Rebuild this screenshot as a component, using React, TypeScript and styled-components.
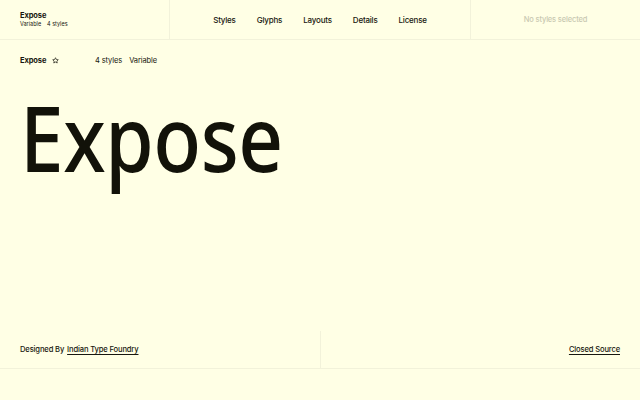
import React, {FC} from 'react';
import styled, {createGlobalStyle} from 'styled-components';

const GlobalStyle = createGlobalStyle`
    html, body {
        margin: 0;
        padding: 0;
        background: #ffffe5;
    }
    body {
        font-family: Inter, 'Liberation Sans', sans-serif;
        color: #17170f;
        -webkit-font-smoothing: antialiased;
    }
`;

const Page = styled.div`
    width: 640px;
    height: 400px;
    display: flex;
    flex-direction: column;
    background: #ffffe5;
    overflow: hidden;
`;

const Header = styled.header`
    height: 39px;
    display: grid;
    grid-template-columns: 170px 1fr 170px;
    border-bottom: 1px solid #f2f2da;
`;

const Brand = styled.div`
    display: flex;
    flex-direction: column;
    justify-content: center;
    padding-left: 20px;
    border-right: 1px solid #f2f2da;
`;

const BrandName = styled.span`
    font-size: 7.5px;
    font-weight: 700;
    line-height: 9px;
    letter-spacing: -0.1px;
`;

const BrandMeta = styled.span`
    font-size: 5.5px;
    line-height: 8px;
    display: flex;
    gap: 6px;
`;

const Nav = styled.nav`
    display: flex;
    align-items: center;
    justify-content: center;
    gap: 21px;
`;

const NavItem = styled.a`
    font-size: 8px;
    font-weight: 500;
    letter-spacing: -0.2px;
    color: #17170f;
    text-decoration: none;
`;

const Selection = styled.div`
    display: flex;
    align-items: center;
    justify-content: center;
    border-left: 1px solid #f2f2da;
    font-size: 7.5px;
    font-weight: 500;
    letter-spacing: -0.15px;
    color: #c9c9b2;
`;

const InfoRow = styled.div`
    height: 40px;
    display: flex;
    align-items: center;
    padding-left: 20px;
    font-size: 7.5px;
    letter-spacing: -0.1px;
`;

const FontTitle = styled.span`
    font-weight: 700;
    display: flex;
    align-items: center;
    gap: 6px;
    width: 75px;
`;

const Meta = styled.span<{gap?: number}>`
    margin-right: ${props => props.gap || 0}px;
`;

const Specimen = styled.div`
    flex: 1;
    padding: 12px 0 0 20px;
`;

// specimen word: Noto Sans squeezed to the narrow proportions of the original face
const BigWord = styled.div`
    display: inline-block;
    font-family: 'Noto Sans', 'Open Sans', sans-serif;
    font-size: 91px;
    font-weight: 500;
    line-height: 1;
    color: #121209;
    letter-spacing: -0.5px;
    transform: scaleX(0.86);
    transform-origin: left top;
`;

const Footer = styled.footer`
    height: 37px;
    display: grid;
    grid-template-columns: 1fr 1fr;
    border-bottom: 1px solid #f2f2da;
    margin-bottom: 31px;
    font-size: 7.6px;
    font-weight: 500;
    letter-spacing: -0.15px;
`;

const FooterCell = styled.div<{align?: 'left' | 'right'}>`
    display: flex;
    align-items: center;
    justify-content: ${props => (props.align === 'right' ? 'flex-end' : 'flex-start')};
    padding: 0 20px;
    border-left: ${props => (props.align === 'right' ? '1px solid #f2f2da' : 'none')};
`;

const FooterLink = styled.a`
    color: #17170f;
    text-decoration: underline;
    text-decoration-thickness: 0.6px;
    text-underline-offset: 1.5px;
    margin-left: 3px;
`;

const Star: FC = () => (
    <svg width="7" height="7" viewBox="0 0 24 24" fill="none" stroke="#17170f" strokeWidth="2.4" strokeLinejoin="round">
        <path d="M12 2.5l2.9 6.1 6.6.8-4.9 4.6 1.3 6.6L12 17.3l-5.9 3.3 1.3-6.6-4.9-4.6 6.6-.8z" />
    </svg>
);

const navItems = ['Styles', 'Glyphs', 'Layouts', 'Details', 'License'];

const App: FC = () => (
    <Page>
        <GlobalStyle />
        <Header>
            <Brand>
                <BrandName>Expose</BrandName>
                <BrandMeta>
                    <span>Variable</span>
                    <span>4 styles</span>
                </BrandMeta>
            </Brand>
            <Nav>
                {navItems.map(item => (
                    <NavItem key={item}>{item}</NavItem>
                ))}
            </Nav>
            <Selection>No styles selected</Selection>
        </Header>
        <InfoRow>
            <FontTitle>
                Expose <Star />
            </FontTitle>
            <Meta gap={7}>4 styles</Meta>
            <Meta>Variable</Meta>
        </InfoRow>
        <Specimen>
            <BigWord>Expose</BigWord>
        </Specimen>
        <Footer>
            <FooterCell>
                Designed By<FooterLink>Indian Type Foundry</FooterLink>
            </FooterCell>
            <FooterCell align="right">
                <FooterLink>Closed Source</FooterLink>
            </FooterCell>
        </Footer>
    </Page>
);

export default App;
